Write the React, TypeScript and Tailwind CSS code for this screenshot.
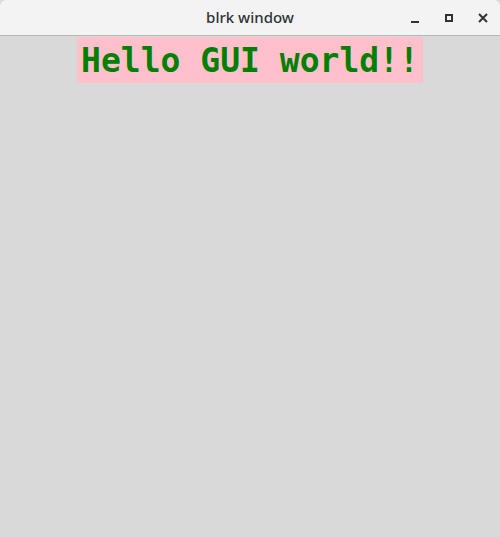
export default function App() {
  return (
    <div className="w-[500px] h-[537px] flex flex-col bg-[#d9d9d9] overflow-hidden">
      {/* Title bar */}
      <div className="h-[36px] shrink-0 bg-[#f3f3f3] border-b border-[#b6b6b3] rounded-t-[6px] flex items-center relative">
        <div className="flex-1 text-center text-[15px] text-[#2e3436] font-['Noto_Sans',sans-serif] font-medium">
          blrk window
        </div>
        <div className="absolute right-0 top-0 h-full flex items-center">
          <div className="w-[34px] flex justify-center">
            <div className="w-[8px] h-[2px] bg-[#2e3436] mt-[8px]"></div>
          </div>
          <div className="w-[34px] flex justify-center">
            <div className="w-[8px] h-[8px] border-2 border-[#2e3436]"></div>
          </div>
          <div className="w-[34px] flex justify-center">
            <svg width="10" height="10" viewBox="0 0 10 10">
              <path d="M1 1L9 9M9 1L1 9" stroke="#2e3436" strokeWidth="2" />
            </svg>
          </div>
        </div>
      </div>

      {/* Content */}
      <div className="flex justify-center pt-[1px]">
        <div className="bg-[#ffc0cb] h-[46px] px-[4px] flex items-center text-[#008000] text-[33px] font-bold font-['DejaVu_Sans_Mono',monospace] leading-none whitespace-pre">
          Hello GUI world!!
        </div>
      </div>
    </div>
  );
}
